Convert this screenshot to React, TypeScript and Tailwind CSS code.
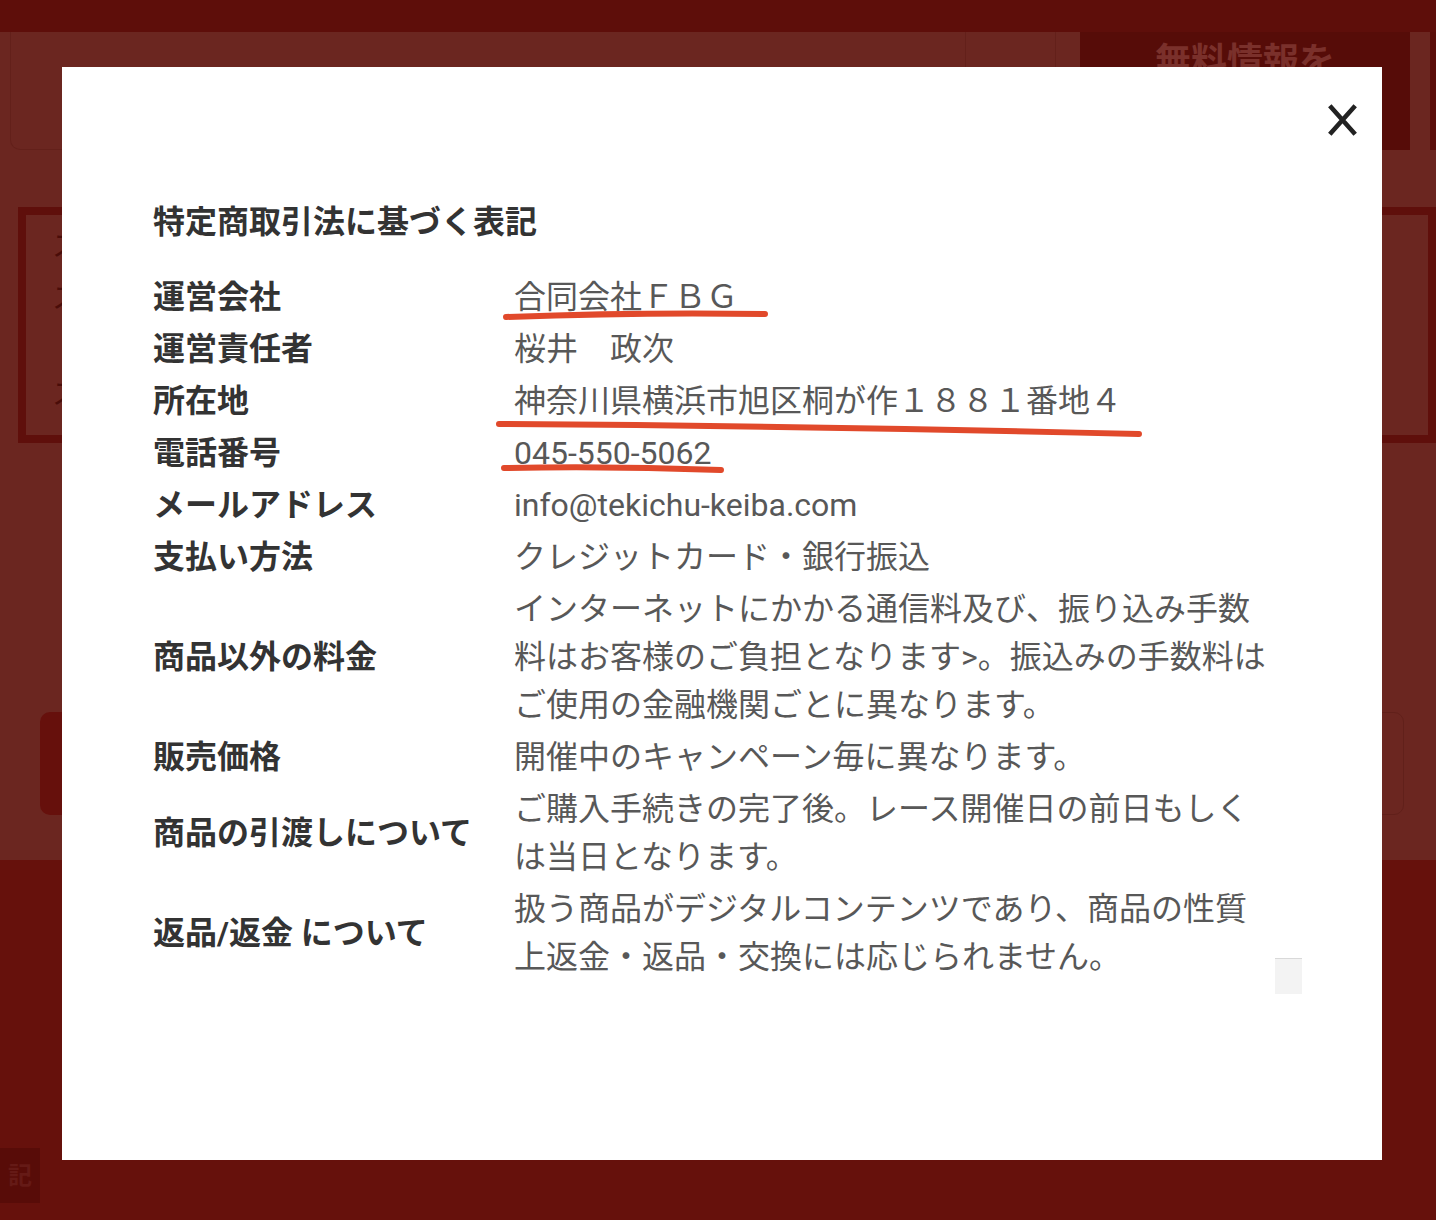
import React from 'react'

const rows: { label: string; lines: string[] }[] = [
  { label: '運営会社', lines: ['合同会社ＦＢＧ'] },
  { label: '運営責任者', lines: ['桜井　政次'] },
  { label: '所在地', lines: ['神奈川県横浜市旭区桐が作１８８１番地４'] },
  { label: '電話番号', lines: ['045-550-5062'] },
  { label: 'メールアドレス', lines: ['info@tekichu-keiba.com'] },
  { label: '支払い方法', lines: ['クレジットカード・銀行振込'] },
  {
    label: '商品以外の料金',
    lines: [
      'インターネットにかかる通信料及び、振り込み手数',
      '料はお客様のご負担となります>。振込みの手数料は',
      'ご使用の金融機関ごとに異なります。',
    ],
  },
  { label: '販売価格', lines: ['開催中のキャンペーン毎に異なります。'] },
  {
    label: '商品の引渡しについて',
    lines: ['ご購入手続きの完了後。レース開催日の前日もしく', 'は当日となります。'],
  },
  {
    label: '返品/返金 について',
    lines: ['扱う商品がデジタルコンテンツであり、商品の性質', '上返金・返品・交換には応じられません。'],
  },
]

function Backdrop() {
  // the page behind the modal, already darkened by the overlay
  return (
    <>
      <div className="h-[32px] bg-[#5e0e0a]" />
      <div className="h-[828px] bg-[#6b2620]">
        <div className="flex h-[118px]">
          <div className="ml-[10px] flex w-[1046px] rounded-b-[10px] border-x border-b border-[#63201a]">
            <div className="w-[955px] border-r border-[#63201a]" />
          </div>
          <div className="ml-[4px] w-[20px]" />
          <div className="flex w-[330px] justify-center bg-[#560c08] pt-[6px] text-[36px] leading-[48px] font-bold text-[#7a302b]">
            無料情報を
          </div>
          <div className="w-[20px]" />
          <div className="flex-1 bg-[#5a0d09]" />
        </div>
        <div className="mt-[57px] ml-[18px] flex h-[236px] flex-col gap-[24px] border-[8px] border-[#5f0f0b] pt-[18px] pl-[26px] text-[28px] leading-[28px] text-[#4a0d09]">
          <span>ス</span>
          <span>ス</span>
          <span className="mt-[44px]">ス</span>
        </div>
        <div className="mt-[269px] flex justify-between pr-[32px] pl-[40px]">
          <div className="h-[103px] w-[560px] rounded-[10px] bg-[#66100c]" />
          <div className="h-[103px] w-[560px] rounded-[10px] border border-[#61201a]" />
        </div>
      </div>
      <div className="mt-[288px] flex h-[55px] w-[40px] items-center justify-center bg-[#580c08] text-[24px] font-bold text-[#651a16]">
        記
      </div>
    </>
  )
}

export default function App() {
  return (
    <div className="relative h-[1220px] w-[1436px] overflow-hidden bg-[#66110c] font-['Roboto','Noto_Sans_CJK_JP',sans-serif]">
      <Backdrop />

      <div className="absolute top-[67px] left-[62px] h-[1093px] w-[1320px] bg-white">
        <button className="absolute top-[37px] left-[1266px] h-[32px] w-[29px]" aria-label="close">
          <svg width="29" height="32" viewBox="0 0 29 32" fill="none">
            <path d="M1.8 1.8 27.2 30.2M27.2 1.8 1.8 30.2" stroke="#222" strokeWidth="4.6" />
          </svg>
        </button>

        <div className="pt-[131px] pl-[91px]">
          <h2 className="text-[32px] leading-[48px] font-bold text-[#333]">特定商取引法に基づく表記</h2>
          <div className="mt-[25px] grid grid-cols-[361px_770px]">
            {rows.map((r) => (
              <React.Fragment key={r.label}>
                <div className="flex items-center py-[2px] text-[32px] leading-[48px] font-bold text-[#333]">
                  {r.label}
                </div>
                <div className="py-[2px] text-[32px] leading-[48px] text-[#585858]">
                  {r.lines.map((l, i) => (
                    <div key={i} className="whitespace-nowrap">
                      {l}
                    </div>
                  ))}
                </div>
              </React.Fragment>
            ))}
          </div>
        </div>

        <div className="absolute top-[891px] left-[1213px] h-[36px] w-[27px] border-t border-[#d9d9d9] bg-[#f3f3f3]" />
      </div>

      {/* hand-drawn markers */}
      <svg className="pointer-events-none absolute inset-0" width="1436" height="1220" viewBox="0 0 1436 1220" fill="none">
        <path d="M506 317 Q 640 312 765 314" stroke="#e1492b" strokeWidth="6" strokeLinecap="round" />
        <path d="M499 424 Q 820 426 1139 434" stroke="#e1492b" strokeWidth="6" strokeLinecap="round" />
        <path d="M504 468 Q 612 466 721 470" stroke="#e1492b" strokeWidth="6" strokeLinecap="round" />
      </svg>
    </div>
  )
}
